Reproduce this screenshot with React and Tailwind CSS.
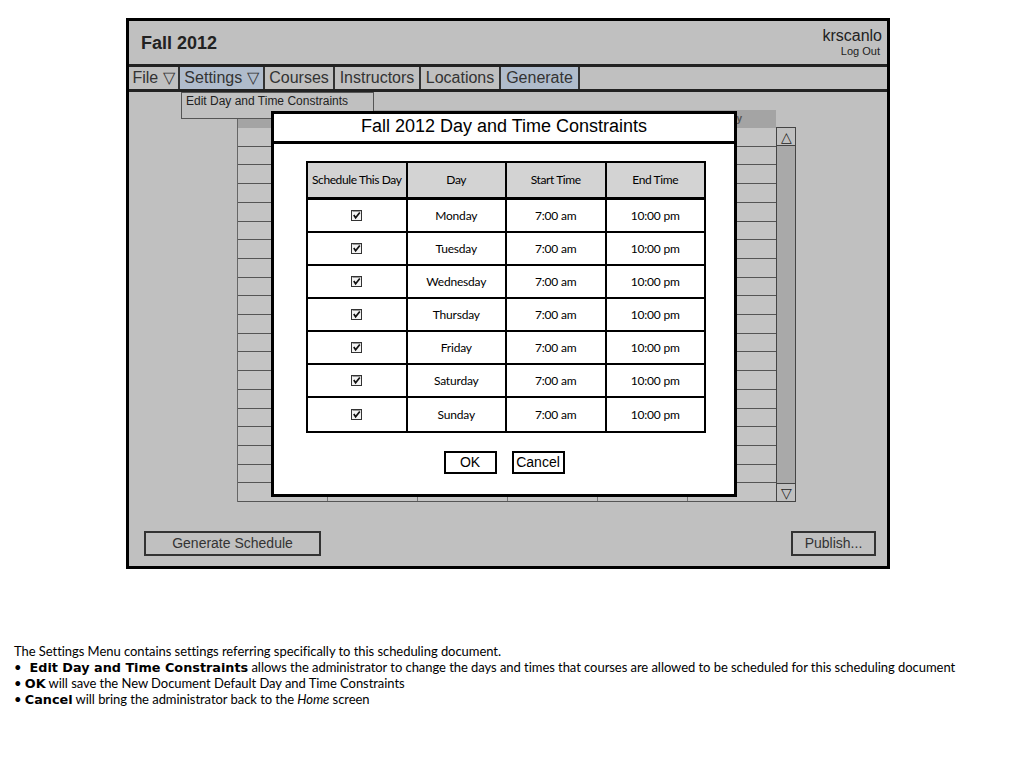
import React from 'react';

const days = ['Monday', 'Tuesday', 'Wednesday', 'Thursday', 'Friday', 'Saturday', 'Sunday'];
const menu = [
  { label: 'File ▽', w: 'w-[51px]' },
  { label: 'Settings ▽', w: 'w-[85px]', active: true },
  { label: 'Courses', w: 'w-[70px]' },
  { label: 'Instructors', w: 'w-[86px]' },
  { label: 'Locations', w: 'w-[80px]' },
  { label: 'Generate', w: 'w-[79px]', active: true },
];

const Check = () => (
  <svg width="11" height="11" viewBox="0 0 11 11">
    <rect x="0.5" y="0.5" width="10" height="10" fill="#f4f4f4" stroke="#333" />
    <path d="M1.5 1.5 H9.5" stroke="#999" />
    <path d="M2.8 5 L4.6 7.8 L8.8 2.4" fill="none" stroke="#111" strokeWidth="1.7" />
  </svg>
);

const BackgroundGrid = () => (
  <div className="ml-[108px] mt-[18px] flex">
    <div className="w-[539px] border-l border-[#666]">
      <div className="h-[18px] bg-[#a4a4a4] text-[10px] font-bold text-[#555] text-right pr-[34px] leading-[18px]">y</div>
      <div className="h-[374px] flex flex-col">
        {Array.from({ length: 20 }).map((_, r) => (
          <div key={r} className="flex-1 flex border-b border-[#555]">
            {Array.from({ length: 6 }).map((_, c) => (
              <div key={c} className={`${c === 5 ? 'w-[88px]' : 'w-[90px] border-r border-[#777]'} bg-[#c4c4c4]`} />
            ))}
          </div>
        ))}
      </div>
    </div>
    <div className="mt-[17px] w-[20px] h-[375px] border border-[#444] bg-[#a9a9a9] flex flex-col justify-between">
      <div className="h-[18px] bg-[#c0c0c0] border-b border-[#444] flex items-center justify-center text-[14px] leading-none text-[#222]">△</div>
      <div className="h-[18px] bg-[#c0c0c0] border-t border-[#444] flex items-center justify-center text-[14px] leading-none text-[#222]">▽</div>
    </div>
  </div>
);

const Modal = () => (
  <div className="absolute left-[271px] top-[111px] w-[466px] h-[386px] bg-white border-[3px] border-black flex flex-col">
    <div className="h-[25px] pb-[2px] box-content border-b-[3px] border-black flex items-center justify-center text-[18px] text-black font-['Liberation_Sans',Arial,sans-serif]">
      Fall 2012 Day and Time Constraints
    </div>
    <div className="ml-[32px] mt-[17px] w-[400px] border-2 border-black font-['Lato',sans-serif] text-[12px] text-black">
      <div className="flex h-[37px] bg-[#d3d3d3] border-b-[3px] border-black tracking-[-0.4px]">
        {['Schedule This Day', 'Day', 'Start Time', 'End Time'].map((h, i) => (
          <div key={h} className={`flex-1 flex items-center justify-center ${i < 3 ? 'border-r-2 border-black' : ''}`}>{h}</div>
        ))}
      </div>
      {days.map((d, r) => (
        <div key={d} className={`flex h-[33px] tracking-[-0.2px] ${r < 6 ? 'border-b-2 border-black' : ''}`}>
          <div className="flex-1 flex items-center justify-center border-r-2 border-black"><Check /></div>
          <div className="flex-1 flex items-center justify-center border-r-2 border-black">{d}</div>
          <div className="flex-1 flex items-center justify-center border-r-2 border-black">7:00 am</div>
          <div className="flex-1 flex items-center justify-center">10:00 pm</div>
        </div>
      ))}
    </div>
    <div className="mt-[18px] flex justify-center gap-[15px] font-['Liberation_Sans',Arial,sans-serif] text-[14px] text-black">
      <div className="w-[53px] h-[23px] border-2 border-black flex items-center justify-center">OK</div>
      <div className="w-[53px] h-[23px] border-2 border-black flex items-center justify-center">Cancel</div>
    </div>
  </div>
);

export default function App() {
  const bold = "font-['DejaVu_Sans',sans-serif] font-bold text-[12.8px] leading-none tracking-normal";
  return (
    <div className="relative w-[1024px] h-[768px] bg-white overflow-hidden">
      <div className="ml-[126px] mt-[18px] w-[764px] h-[551px] border-[3px] border-black bg-[#c0c0c0] flex flex-col font-['Liberation_Sans',Arial,sans-serif] text-[#222]">
        <div className="h-[43px] flex justify-between shrink-0">
          <div className="pl-[12px] pt-[1px] flex items-center text-[18px] font-bold">Fall 2012</div>
          <div className="pr-[5px] pt-[6px] flex flex-col items-end">
            <div className="text-[16px] leading-[18px]">krscanlo</div>
            <div className="text-[11px] leading-[12px] pr-[2px]">Log Out</div>
          </div>
        </div>
        <div className="h-[22px] border-y-[3px] border-[#222] box-content flex shrink-0">
          {menu.map((m) => (
            <div key={m.label} className={`${m.w} border-r-2 border-[#333] flex items-center justify-center text-[16px] leading-none text-[#333] pb-[1px] ${m.active ? 'bg-[#b0bccc]' : ''}`}>
              {m.label}
            </div>
          ))}
        </div>
        <div className="flex-1 flex flex-col">
          <BackgroundGrid />
          <div className="mt-[29px] flex justify-between pl-[15px] pr-[11px] text-[14px] text-[#333]">
            <div className="w-[177px] h-[25px] border-2 border-[#333] flex items-center justify-center">Generate Schedule</div>
            <div className="w-[85px] h-[25px] border-2 border-[#333] flex items-center justify-center">Publish...</div>
          </div>
        </div>
      </div>

      <div className="absolute left-[181px] top-[92px] w-[193px] h-[27px] bg-[#c0c0c0] border border-[#555] pl-[4px] text-[12px] leading-[16px] text-[#222] font-['Liberation_Sans',Arial,sans-serif]">
        Edit Day and Time Constraints
      </div>

      <Modal />

      <div className="mt-[74px] pl-[14px] font-['Lato',sans-serif] text-[13px] leading-[16px] text-black tracking-[-0.05px]">
        <div className="h-[16px]">The Settings Menu contains settings referring specifically to this scheduling document.</div>
        <div className="h-[16px]">•<b className={`ml-[8px] ${bold}`}>Edit Day and Time Constraints</b> allows the administrator to change the days and times that courses are allowed to be scheduled for this scheduling document</div>
        <div className="h-[16px]">• <b className={bold}>OK</b> will save the New Document Default Day and Time Constraints</div>
        <div className="h-[16px]">• <b className={bold}>Cancel</b> will bring the administrator back to the <i>Home</i> screen</div>
      </div>
    </div>
  );
}
